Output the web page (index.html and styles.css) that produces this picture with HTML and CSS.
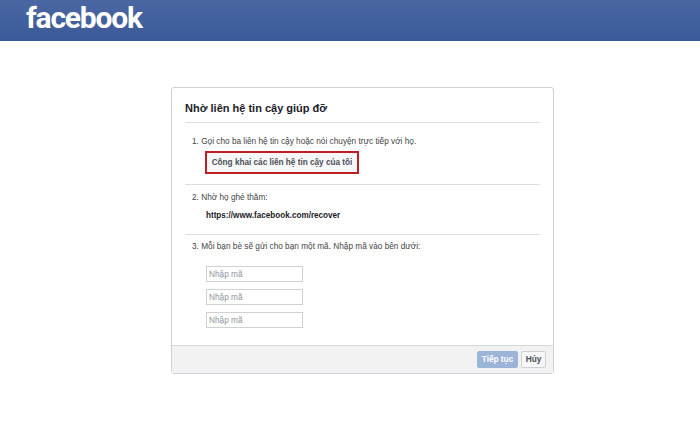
FILE: index.html
```html
<!DOCTYPE html>
<html lang="vi">
<head>
  <meta charset="UTF-8" />
  <title>Facebook</title>
  <link rel="stylesheet" href="styles.css">
</head>
<body>
  <div class="topbar">
    <span class="logo">facebook</span>
  </div>

  <div class="dialog">
    <div class="dialog-body">
      <h2 class="dialog-title">Nhờ liên hệ tin cậy giúp đỡ</h2>

      <div class="step step-one">
        <p class="step-text">1. Gọi cho ba liên hệ tin cậy hoặc nói chuyện trực tiếp với họ.</p>
        <div class="reveal-box">Công khai các liên hệ tin cậy của tôi</div>
      </div>

      <div class="step step-two">
        <p class="step-text">2. Nhờ họ ghé thăm:</p>
        <p class="recover-link">https://www.facebook.com/recover</p>
      </div>

      <div class="step step-three">
        <p class="step-text">3. Mỗi bạn bè sẽ gửi cho bạn một mã. Nhập mã vào bên dưới:</p>
        <div class="code-list">
          <input class="code-input" type="text" placeholder="Nhập mã" />
          <input class="code-input" type="text" placeholder="Nhập mã" />
          <input class="code-input" type="text" placeholder="Nhập mã" />
        </div>
      </div>
    </div>

    <div class="dialog-footer">
      <button class="btn btn-primary" type="button">Tiếp tục</button>
      <button class="btn btn-cancel" type="button">Hủy</button>
    </div>
  </div>
</body>
</html>
```

FILE: styles.css
```css
* {
  margin: 0;
  padding: 0;
  box-sizing: border-box;
}

body {
  background: #fff;
  font-family: "Liberation Sans", Arial, sans-serif;
  color: #444;
  overflow: hidden;
}

.topbar {
  height: 41px;
  padding-left: 26px;
  background: linear-gradient(#4a67a3, #3b5998);
  display: flex;
  align-items: flex-start;
}

.logo {
  color: #fff;
  font-family: Roboto, sans-serif;
  font-size: 30px;
  font-weight: 700;
  letter-spacing: -1.2px;
  line-height: 36px;
}

.dialog {
  width: 383px;
  height: 287px;
  margin: 46px 0 0 171px;
  border: 1px solid #d0d1d5;
  border-radius: 3px;
  display: flex;
  flex-direction: column;
}

.dialog-body {
  flex: 1;
  padding: 0 13px;
}

.dialog-title {
  height: 35px;
  padding-top: 13px;
  border-bottom: 1px solid #dcdee3;
  color: #1d2129;
  font-size: 11px;
  font-weight: 700;
  line-height: 14px;
}

.step {
  padding-left: 7px;
}

.step-text {
  font-size: 8.25px;
  line-height: 12px;
}

.step-one {
  height: 62px;
  padding-top: 13px;
  border-bottom: 1px solid #dcdee3;
}

.reveal-box {
  width: 154px;
  height: 23px;
  margin: 3px 0 0 13px;
  border: 2px solid #bf1e24;
  background: #f6f7f9;
  color: #4b4f56;
  font-size: 8.2px;
  font-weight: 700;
  line-height: 19px;
  text-align: center;
  white-space: nowrap;
}

.step-two {
  height: 50px;
  padding-top: 7px;
  border-bottom: 1px solid #dcdee3;
}

.recover-link {
  margin: 6px 0 0 14px;
  color: #1d2129;
  font-size: 8.15px;
  font-weight: 700;
  line-height: 12px;
}

.step-three {
  padding-top: 6px;
}

.code-list {
  margin: 13px 0 0 14px;
  display: flex;
  flex-direction: column;
  gap: 7px;
}

.code-input {
  width: 97px;
  height: 16px;
  padding: 0 2px;
  border: 1px solid #cfd1d4;
  font-family: inherit;
  font-size: 8.25px;
}

.code-input::placeholder {
  color: #8d949e;
}

.dialog-footer {
  height: 28px;
  padding-right: 7px;
  background: #f2f2f2;
  border-top: 1px solid #d5d7da;
  display: flex;
  justify-content: flex-end;
  align-items: center;
  gap: 3px;
}

.btn {
  height: 17px;
  border-radius: 2px;
  font-family: inherit;
  font-size: 8.25px;
  font-weight: 700;
}

.btn-primary {
  width: 41px;
  background: #9cb4d8;
  border: 1px solid #9cb4d8;
  color: #fff;
}

.btn-cancel {
  width: 25px;
  background: #f6f7f9;
  border: 1px solid #ced0d4;
  color: #4b4f56;
}
```
